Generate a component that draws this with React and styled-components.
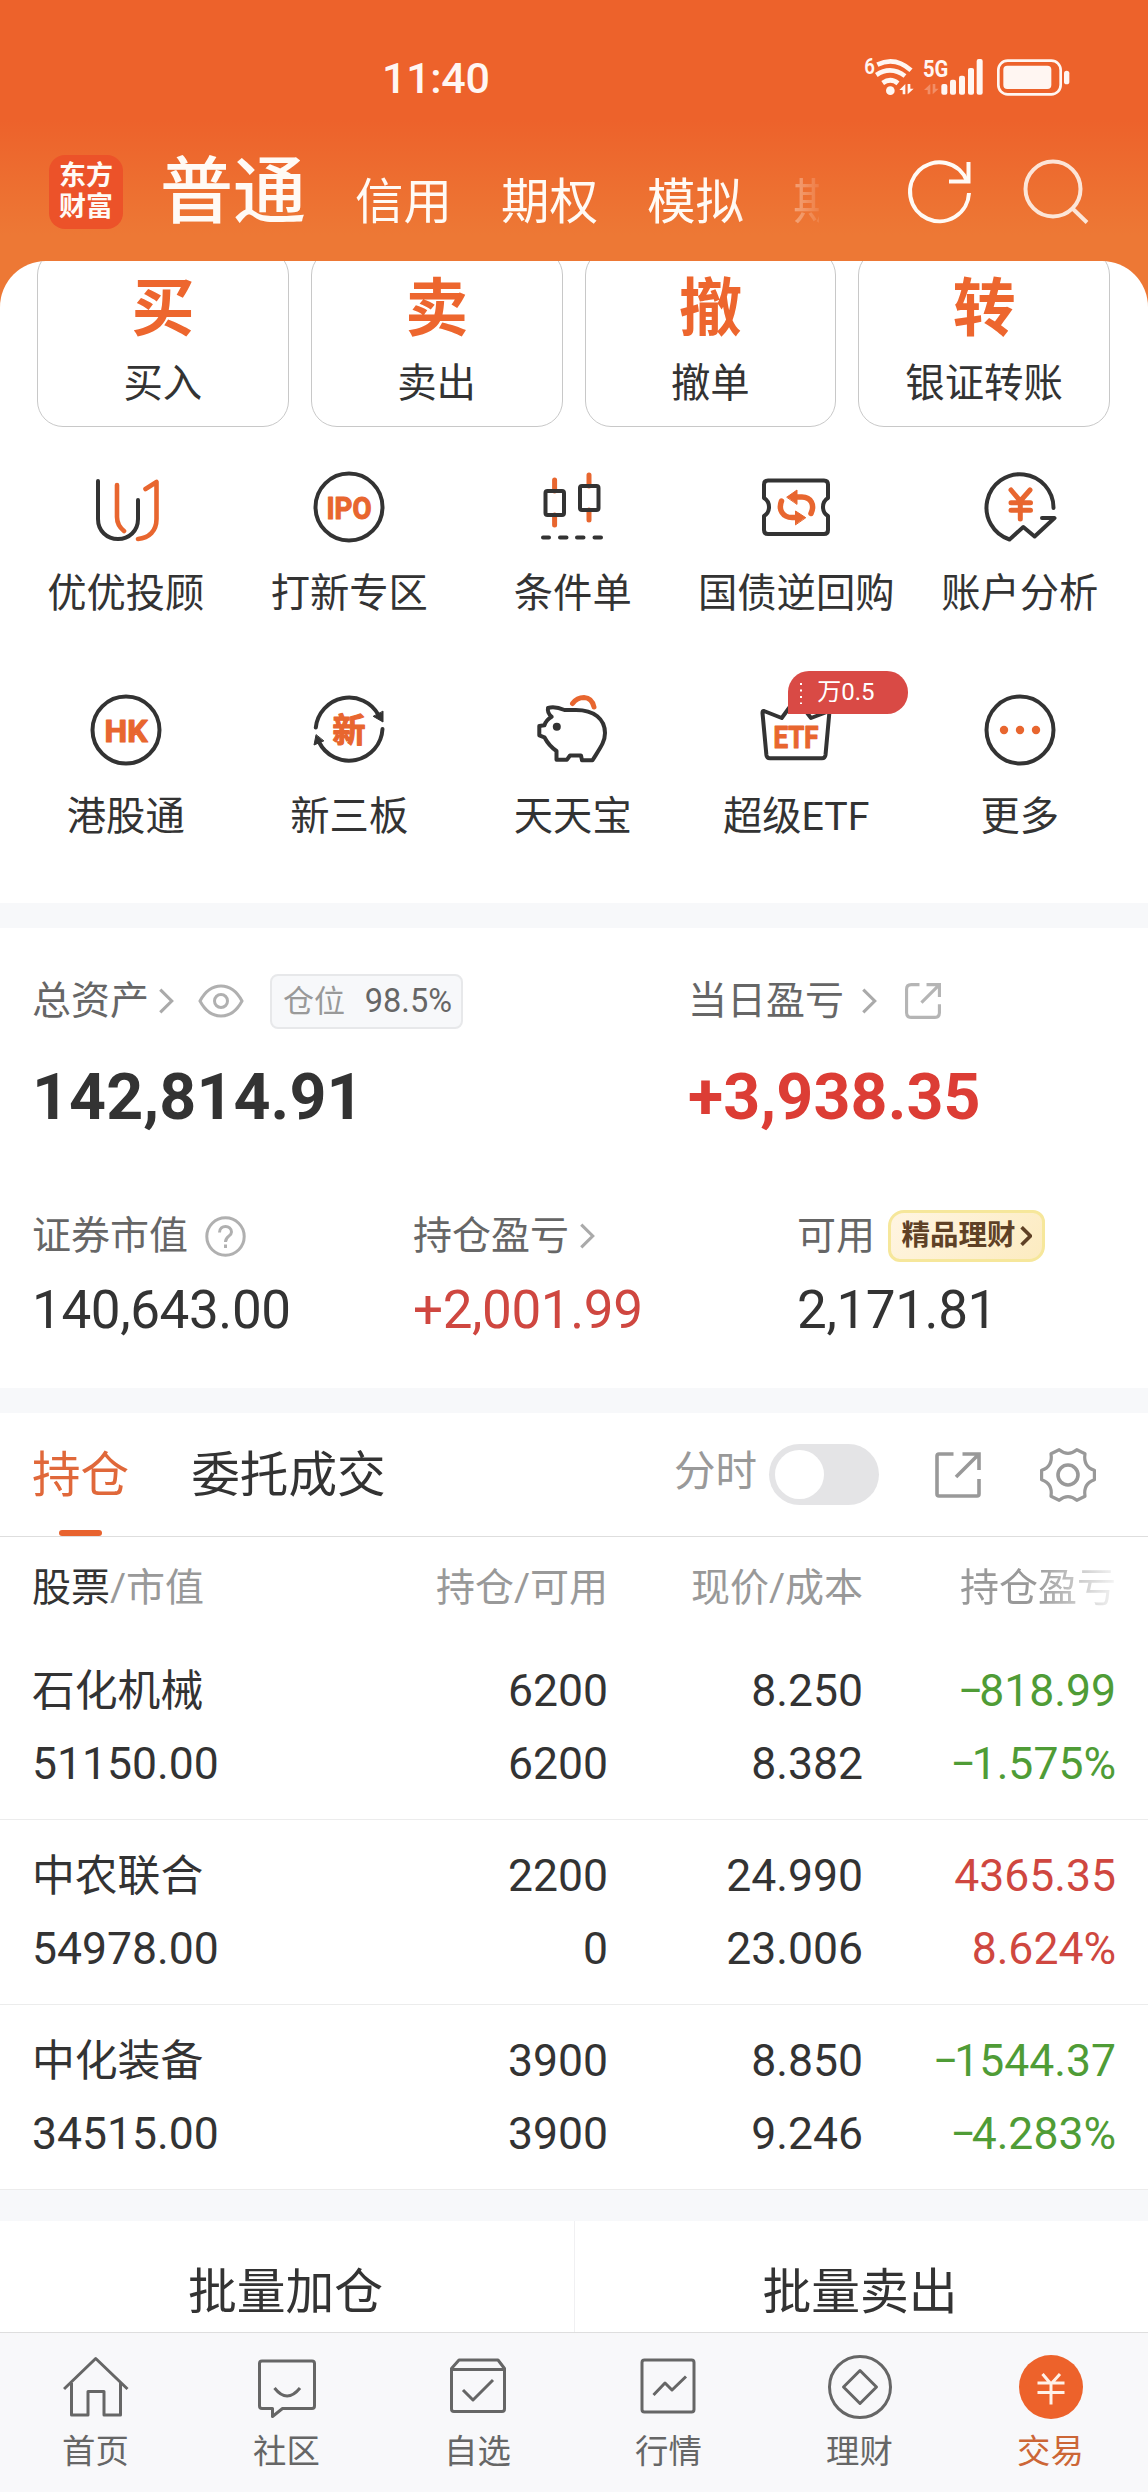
import React from 'react'
import styled, { createGlobalStyle } from 'styled-components'

const GlobalStyle = createGlobalStyle`
* {
    box-sizing: border-box;
}

body {
    margin: 0;
    background: #fff;
    font-family: Roboto, 'Noto Sans CJK SC', sans-serif;
    color: #333;
}

svg {
    display: block;
    flex-shrink: 0;
}
`

const Page = styled.div`
width: 1148px;
height: 2492px;
display: flex;
flex-direction: column;
overflow: hidden;
background: linear-gradient(#ed622b 0, #ed622b 120px, #ed7835 235px, #ed7835 320px, #fff 320px);
`

const StatusBar = styled.div`
height: 120px;
padding: 40px 28px 0 382px;
display: flex;
align-items: center;
justify-content: space-between;
color: #fff6f2;
`

const Time = styled.span`
font-size: 43px;
font-weight: 500;
line-height: 76px;
letter-spacing: -0.3px;
margin-top: -4px;
`

const NavBar = styled.div`
height: 141px;
padding: 3px 0 0 49px;
display: flex;
align-items: center;
color: #fffaf5;
`

const Logo = styled.div`
width: 74px;
height: 74px;
padding-top: 6px;
border-radius: 16px;
background: #ec5229;
font-size: 27px;
font-weight: 700;
line-height: 31px;
text-align: center;
`

const NavTabs = styled.div`
width: 659px;
height: 130px;
margin-left: 37px;
display: flex;
align-items: center;
gap: 49px;
overflow: hidden;
white-space: nowrap;
mask-image: linear-gradient(90deg, #000 87%, rgba(0,0,0,0.1) 100%);
`

const NavTab = styled.span`
flex-shrink: 0;
font-size: ${({ $active }) => ($active ? 73 : 48.5)}px;
font-weight: ${({ $active }) => ($active ? 500 : 400)};
line-height: 110px;
padding-top: ${({ $active }) => ($active ? 0 : 22)}px;
`

const NavIcons = styled.div`
margin-left: 88px;
display: flex;
gap: 50px;
`

const Sheet = styled.div`
height: 642px;
padding: 0 38px 0 37px;
border-radius: 46px 46px 0 0;
background: #fff;
overflow: hidden;
`

const Cards = styled.div`
display: grid;
grid-template-columns: repeat(4, 1fr);
gap: 22px;
margin-top: -12px;
`

const Card = styled.div`
height: 178px;
padding-top: 23px;
border: 1px solid #c8c8c8;
border-radius: 26px;
display: flex;
flex-direction: column;
align-items: center;
font-size: 39.4px;
line-height: 60px;
`

const CardGlyph = styled.div`
color: #ed662e;
font-size: 63px;
font-weight: 700;
line-height: 72px;
margin-bottom: 9px;
`

const Shortcuts = styled.div`
display: grid;
grid-template-columns: repeat(5, 223.5px);
margin: 42px -22px 0 -23px;
row-gap: 76px;
`

const Shortcut = styled.div`
display: flex;
flex-direction: column;
align-items: center;
gap: 19px;
height: 147px;
font-size: 39.3px;
line-height: 60px;
white-space: nowrap;
`

const ShortcutIcon = styled.div`
position: relative;
`

const Badge = styled.div`
position: absolute;
left: 30px;
top: -21px;
width: 120px;
height: 43px;
padding-left: 10px;
display: flex;
align-items: center;
gap: 14px;
border-radius: 21px 21px 21px 0;
background: #d94a45;
color: #fff;
font-size: 24px;
line-height: 45px;
`

const Band = styled.div`
height: ${({ $height }) => $height}px;
flex-shrink: 0;
background: #f7f8fa;
`

const Assets = styled.div`
height: 460px;
padding: 43px 32px 0;
background: #fff;
`

const Figures = styled.div`
display: grid;
grid-template-columns: ${({ $columns }) => $columns};
margin-top: ${({ $top }) => $top || 0}px;
`

const FigureLabel = styled.div`
height: 60px;
display: flex;
align-items: center;
font-size: 39px;
line-height: 62px;
color: #666;
`

const Total = styled.div`
margin-top: 31px;
font-size: 64.5px;
font-weight: 700;
line-height: 70px;
letter-spacing: 0.1px;
color: ${({ $color }) => $color || '#333'};
`

const Amount = styled.div`
margin-top: 14px;
font-size: 53px;
line-height: 60px;
letter-spacing: -0.4px;
color: ${({ $color }) => $color || '#333'};
`

const Spacer = styled.span`
width: ${({ $width }) => $width}px;
flex-shrink: 0;
`

const Position = styled.div`
width: 193px;
height: 55px;
display: flex;
align-items: center;
justify-content: space-between;
padding: 0 9px 0 11px;
border: 2px solid #e7e8ea;
border-radius: 8px;
background: #f7f8fa;
font-size: 32.5px;
line-height: 51px;
color: #666;

span {
    font-size: 31px;
    color: #999;
}
`

const Wealth = styled.div`
width: 157px;
height: 52px;
display: flex;
align-items: center;
justify-content: center;
gap: 4px;
border: 3px solid #f6e79b;
border-radius: 16px 12px 16px 12px;
background: linear-gradient(135deg, #fff5e2, #fcebc0);
font-size: 28.5px;
font-weight: 700;
line-height: 48px;
color: #5f4126;
`

const TabBar = styled.div`
height: 124px;
padding: 0 52px 0 32px;
display: flex;
align-items: center;
flex-shrink: 0;
border-bottom: 1px solid #dedede;
background: #fff;
`

const Tab = styled.div`
height: 123px;
display: flex;
flex-direction: column;
align-items: center;
margin-right: 62px;
font-size: 48.6px;
line-height: 117px;
padding-top: 4px;
color: ${({ $active }) => ($active ? '#e0683a' : '#333')};

&::after {
    content: '';
    width: 43px;
    height: 6px;
    margin-top: -4px;
    border-radius: 3px;
    background: ${({ $active }) => ($active ? '#e8632f' : 'transparent')};
}
`

const SwitchLabel = styled.span`
margin-left: auto;
margin-right: 12px;
padding-bottom: 5px;
font-size: 41.5px;
line-height: 60px;
color: #999;
`

const Switch = styled.div`
width: 110px;
height: 61px;
padding: 6px;
border-radius: 31px;
background: #e4e4e6;

&::after {
    content: '';
    display: block;
    width: 49px;
    height: 49px;
    border-radius: 50%;
    background: #fff;
}
`

const Row = styled.div`
display: grid;
grid-template-columns: 276px 300px 255px 253px;
padding: 0 32px;
text-align: right;
background: #fff;
`

const HeadRow = styled(Row)`
height: 98px;
flex-shrink: 0;
font-size: 39px;
line-height: 102px;
color: #999;

b {
    font-weight: 400;
    color: #333;
}

> :first-child {
    text-align: left;
}

> :last-child {
    mask-image: linear-gradient(90deg, #000 68%, rgba(0,0,0,0.1) 100%);
}
`

const HoldingRow = styled(Row)`
height: 185px;
padding-top: 20px;
flex-shrink: 0;
border-bottom: 1px solid #ececec;
font-size: 44.5px;
line-height: 73px;
`

const Cell = styled.div`
color: ${({ $color }) => $color || '#333'};
text-align: ${({ $left }) => ($left ? 'left' : 'right')};
`

const Name = styled.div`
font-size: 42.8px;
`

const Sign = styled.span`
margin-right: -4px;
`

const Actions = styled.div`
height: 111px;
display: grid;
grid-template-columns: 1fr 1fr;
flex-shrink: 0;
background: #fff;
`

const Action = styled.div`
padding: 16px 3px 0 0;
font-size: 48.8px;
line-height: 112px;
text-align: center;

& + & {
    border-left: 1px solid #f0f0f2;
}
`

const BottomNav = styled.div`
height: 160px;
padding: 19px 2px 0 0;
display: grid;
grid-template-columns: repeat(6, 1fr);
flex-shrink: 0;
border-top: 1px solid #dedede;
background: #f8f8fa;
`

const NavItem = styled.div`
display: flex;
flex-direction: column;
align-items: center;
gap: 10px;
font-size: 33.4px;
line-height: 40px;
color: ${({ $active }) => ($active ? '#cc6636' : '#666')};
`

const RED = '#cf4740'
const GREEN = '#4f9c36'
const ORANGE = '#e8662f'

const StatusIcons = () => (
    <svg width="280" height="80" viewBox="0 0 840 240" fill="currentColor">
        <text x="73" y="101" fontSize="66" fontWeight="600" textLength="32" lengthAdjust="spacingAndGlyphs">6</text>
        <g fill="none" stroke="currentColor" strokeWidth="14">
            <path d="M112 74Q165 48 213 91" />
            <path d="M109 105Q152 76 195 108" />
            <path d="M128 129Q152 112 174 130" />
        </g>
        <circle cx="151" cy="152" r="13" />
        <path d="M196 132V163H188V150H178ZM203 132V163L221 146H211V132Z" />
        <text x="249" y="110" fontSize="72" fontWeight="700" textLength="76" lengthAdjust="spacingAndGlyphs">5G</text>
        <path opacity="0.3" d="M271 132V163H263V150H252ZM278 132V163L296 146H286V132Z" />
        <rect x="304" y="132" width="18" height="32" rx="6" />
        <rect x="330" y="119" width="18" height="45" rx="6" />
        <rect x="357" y="107" width="18" height="57" rx="6" />
        <rect x="384" y="84" width="18" height="80" rx="6" />
        <rect x="410" y="57" width="18" height="107" rx="6" />
        <rect x="475" y="62" width="187" height="101" rx="28" fill="none" stroke="currentColor" strokeWidth="8" />
        <rect x="490" y="77" width="144" height="70" rx="12" />
        <rect x="672" y="92" width="16" height="41" rx="8" />
    </svg>
)

const Chevron = ({ width = 16, height = 26, color = '#aaa', stroke = 3 }) => (
    <svg width={width} height={height} viewBox="0 0 15 25" fill="none" stroke={color} strokeWidth={stroke}>
        <path d="M2 1.5L13 12.5L2 23.5" />
    </svg>
)

const ShareIcon = ({ size, color, radius = 2 }) => (
    <svg width={size} height={size} viewBox="0 0 46 46" fill="none" stroke={color} strokeWidth={size < 40 ? 4 : 3.6}>
        <path d={`M18.500 2H${2 + radius}Q2 2 2 ${2 + radius}V${44 - radius}Q2 44 ${2 + radius} 44H${44 - radius}Q44 44 44 ${44 - radius}V27`} />
        <path d="M27.500 2H44V18M44 2L21 25" />
    </svg>
)

const GearIcon = () => (
    <svg width="56" height="56" viewBox="-28 -28 56 56" fill="none" stroke="#999" strokeWidth="3.2" strokeLinejoin="round">
        <path d="M-8.800 -25.300Q0 -18 8.800 -25.300L17 -21.300Q15 -8.500 26.400 -4.700V4.700Q15 8.500 17 21.300L8.800 25.300Q0 18 -8.800 25.300L-17 21.300Q-15 8.500 -26.400 4.700V-4.700Q-15 -8.500 -17 -21.300Z" />
        <circle r="10" strokeWidth="3.6" />
    </svg>
)

const IconText = ({ children, width, y = 49.5, size = 32 }) => (
    <text
        x={38 - width / 2}
        y={y}
        fontSize={size}
        fontWeight="700"
        textLength={width}
        lengthAdjust="spacingAndGlyphs"
        fill={ORANGE}
        stroke={ORANGE}
        strokeWidth="1.2"
        strokeLinejoin="round"
    >
        {children}
    </text>
)

const shortcutDrawings = {
    uu: (
        <>
            <path d="M10 12V50C10 62 19 70 30 70S50 62 50 50V31" />
            <path stroke={ORANGE} strokeWidth="4.600" d="M29 16V48C29 54 31 58 36 62M57.500 20L68.500 13V50C68.500 62 61 69 50 70" />
        </>
    ),
    ipo: (
        <>
            <circle cx="38" cy="38" r="33.500" />
            <IconText width={45}>IPO</IconText>
        </>
    ),
    candle: (
        <>
            <path stroke={ORANGE} strokeWidth="5" d="M19.600 11V22M19.600 46V56M54 6V17M54 41V51" />
            <rect x="10.500" y="22" width="18.500" height="24" rx="2" />
            <rect x="45" y="17" width="18.500" height="24" rx="2" />
            <path d="M8 68.500H14M25 68.500H31.500M42 68.500H48.500M59.500 68.500H66" />
        </>
    ),
    repo: (
        <>
            <path d="M10 11.500H66Q70 11.500 70 15.500V29Q65 32 65 38T70 47V61Q70 65 66 65H10Q6 65 6 61V47Q11 44 11 38T6 29V15.500Q6 11.500 10 11.500Z" />
            <path stroke={ORANGE} strokeWidth="5.500" d="M53 44.500C57 36 53 28 44 28H38M23.500 32C20 41 25 48.500 34 48.500H38" />
            <path stroke={ORANGE} strokeWidth="1" fill={ORANGE} d="M29 28L39 21V35ZM47.500 48.500L37.500 42V55.500Z" />
        </>
    ),
    analysis: (
        <>
            <path d="M71.500 39A33.500 33.500 0 1 0 27.500 70.500L41.300 58L52.600 67.500L72.500 49H60" />
            <path stroke={ORANGE} strokeWidth="5" d="M29 21L38.300 32L48 21M38.300 32V50M29 33.700H48.500M29 41.300H48.500" />
        </>
    ),
    hk: (
        <>
            <circle cx="38" cy="38" r="33.500" />
            <IconText width={43}>HK</IconText>
        </>
    ),
    neeq: (
        <>
            <path d="M4.800 35.500A33.500 33.500 0 0 1 67.500 23M71.500 37A33.500 33.500 0 0 1 8 50" />
            <path strokeWidth="1" fill="#333" d="M72 19.500V30L62.500 24.500ZM5 43L3 53L12.500 49Z" />
            <IconText width={33} size={33}>新</IconText>
        </>
    ),
    piggy: (
        <>
            <path d="M13 16Q20 14 29.500 18H38C60 17 70 28 70 41C70 50 65 56 57.500 68.300H47L46 63.500H35L32 67.700H21.500V59Q14 54 9.400 45.300L4.300 43.300V34L9.400 33.300Q11 28 16.700 24.700Q12 21 13 16Z" />
            <circle cx="21.800" cy="34.700" r="4" fill="#333" stroke="none" />
            <path stroke={ORANGE} strokeWidth="5" d="M37.500 11.500Q42 5.500 49 5.500Q57 6 59 15" />
        </>
    ),
    etf: (
        <>
            <path d="M6 19L23.700 26L38 6.500L53 26L71.500 19L67.500 63Q67 66.300 64 66.300H12Q8.800 66.300 8.400 63L4.500 21Q4.500 18.500 6 19Z" />
            <IconText width={45} y={55.5}>ETF</IconText>
        </>
    ),
    more: (
        <>
            <circle cx="38" cy="38" r="33.500" />
            <g fill={ORANGE} stroke="none">
                <circle cx="22" cy="38" r="4.200" />
                <circle cx="38" cy="38" r="4.200" />
                <circle cx="54" cy="38" r="4.200" />
            </g>
        </>
    ),
}

const bottomDrawings = {
    home: <path d="M1 37L32.700 6.500L64.500 37M8.500 31V63H25V39.500H41V63H57.500V31" />,
    social: (
        <>
            <path d="M8 9H58Q60.500 9 60.500 11.500V54Q60.500 56.500 58 56.500H28.500L18.500 64.500V56.500H8Q5.500 56.500 5.500 54V11.500Q5.500 9 8 9Z" />
            <path d="M20.500 36Q33 52 46 36" />
        </>
    ),
    watch: (
        <>
            <path d="M14 8H53L59.500 16.500V57Q59.500 59.500 57 59.500H9Q6.500 59.500 6.500 57V16.500ZM6.500 17.500H59.500" />
            <path d="M18 38L28 48L48 28" />
        </>
    ),
    quote: (
        <>
            <rect x="6" y="8" width="52" height="52" rx="2.500" />
            <path d="M17.500 43L29 31L36 38L50 24.500" />
        </>
    ),
    wealth: (
        <>
            <circle cx="33" cy="35" r="30.500" />
            <path d="M33 18.500L49.500 35L33 51.500L16.500 35Z" />
        </>
    ),
    trade: (
        <>
            <circle cx="33" cy="35" r="32" fill="#ed622b" stroke="none" />
            <path stroke="#fff1e8" d="M24.500 22L33 32L42 22M33 32V52.500M19.500 31H46.500M19.500 40.500H46.500" />
        </>
    ),
}

const navTabs = ['信用', '期权', '模拟', '期']

const cards = [
    { glyph: '买', label: '买入' },
    { glyph: '卖', label: '卖出' },
    { glyph: '撤', label: '撤单' },
    { glyph: '转', label: '银证转账' },
]

const shortcuts = [
    { icon: 'uu', label: '优优投顾' },
    { icon: 'ipo', label: '打新专区' },
    { icon: 'candle', label: '条件单' },
    { icon: 'repo', label: '国债逆回购' },
    { icon: 'analysis', label: '账户分析' },
    { icon: 'hk', label: '港股通' },
    { icon: 'neeq', label: '新三板' },
    { icon: 'piggy', label: '天天宝' },
    { icon: 'etf', label: '超级ETF', badge: '万0.5' },
    { icon: 'more', label: '更多' },
]

const holdings = [
    { name: '石化机械', value: '51150.00', count: '6200', free: '6200', price: '8.250', cost: '8.382', loss: true, profit: '818.99', rate: '1.575%' },
    { name: '中农联合', value: '54978.00', count: '2200', free: '0', price: '24.990', cost: '23.006', profit: '4365.35', rate: '8.624%' },
    { name: '中化装备', value: '34515.00', count: '3900', free: '3900', price: '8.850', cost: '9.246', loss: true, profit: '1544.37', rate: '4.283%' },
]

const bottomItems = [
    { icon: 'home', label: '首页' },
    { icon: 'social', label: '社区' },
    { icon: 'watch', label: '自选' },
    { icon: 'quote', label: '行情' },
    { icon: 'wealth', label: '理财' },
    { icon: 'trade', label: '交易', active: true },
]

const Header = () => (
    <>
        <StatusBar>
            <Time>11:40</Time>
            <StatusIcons />
        </StatusBar>
        <NavBar>
            <Logo>东方<br />财富</Logo>
            <NavTabs>
                <NavTab $active>普通</NavTab>
                {navTabs.map(tab => <NavTab key={tab}>{tab}</NavTab>)}
            </NavTabs>
            <NavIcons>
                <svg width="66" height="66" viewBox="0 0 66 66" fill="none" stroke="currentColor" strokeWidth="4">
                    <path d="M62 34A29.500 29.500 0 1 1 60 22" />
                    <path d="M61.500 3V22.500H42" />
                </svg>
                <svg width="66" height="66" viewBox="0 0 66 66" fill="none" stroke="currentColor" strokeWidth="4" opacity="0.850">
                    <circle cx="30" cy="30" r="27.500" />
                    <path d="M50 50L64 63.500" />
                </svg>
            </NavIcons>
        </NavBar>
    </>
)

const AssetSummary = () => (
    <Assets>
        <Figures $columns="656px 1fr">
            <div>
                <FigureLabel>
                    总资产<Spacer $width={9} /><Chevron /><Spacer $width={24} />
                    <svg width="46" height="34" viewBox="0 0 46 34" fill="none" stroke="#b0b0b0" strokeWidth="3">
                        <path d="M2 17Q10 2 23 2T44 17Q36 32 23 32T2 17Z" />
                        <circle cx="23" cy="17" r="6.500" />
                    </svg>
                    <Spacer $width={26} />
                    <Position><span>仓位</span>98.5%</Position>
                </FigureLabel>
                <Total>142,814.91</Total>
            </div>
            <div>
                <FigureLabel>
                    当日盈亏<Spacer $width={17} /><Chevron /><Spacer $width={28} />
                    <ShareIcon size={36} color="#b5b5b5" radius={6} />
                </FigureLabel>
                <Total $color="#dc3d35">+3,938.35</Total>
            </div>
        </Figures>
        <Figures $columns="381px 384px 1fr" $top={74}>
            <div>
                <FigureLabel>
                    证券市值<Spacer $width={17} />
                    <svg width="41" height="41" viewBox="0 0 41 41" fill="none" stroke="#b0b0b0" strokeWidth="3">
                        <circle cx="20.500" cy="20.500" r="18.700" />
                        <path d="M14.500 16.500C14.500 8.500 26.500 8.500 26.500 16C26.500 20.500 20.500 20 20.500 26M20.500 28.500V32" />
                    </svg>
                </FigureLabel>
                <Amount>140,643.00</Amount>
            </div>
            <div>
                <FigureLabel>持仓盈亏<Spacer $width={10} /><Chevron /></FigureLabel>
                <Amount $color={RED}>+2,001.99</Amount>
            </div>
            <div>
                <FigureLabel>
                    可用<Spacer $width={13} />
                    <Wealth>精品理财<Chevron width={12} height={20} color="#5f4126" stroke={4.5} /></Wealth>
                </FigureLabel>
                <Amount>2,171.81</Amount>
            </div>
        </Figures>
    </Assets>
)

const Holdings = () => (
    <>
        <TabBar>
            <Tab $active>持仓</Tab>
            <Tab>委托成交</Tab>
            <SwitchLabel>分时</SwitchLabel>
            <Switch />
            <Spacer $width={56} />
            <ShareIcon size={46} color="#999" />
            <Spacer $width={59} />
            <GearIcon />
        </TabBar>
        <HeadRow>
            <div><b>股票</b>/市值</div>
            <div>持仓/可用</div>
            <div>现价/成本</div>
            <div>持仓盈亏</div>
        </HeadRow>
        {holdings.map(item => (
            <HoldingRow key={item.name}>
                <Cell $left><Name>{item.name}</Name>{item.value}</Cell>
                <Cell>{item.count}<br />{item.free}</Cell>
                <Cell>{item.price}<br />{item.cost}</Cell>
                <Cell $color={item.loss ? GREEN : RED}>
                    {item.loss && <Sign>−</Sign>}{item.profit}
                    <br />
                    {item.loss && <Sign>−</Sign>}{item.rate}
                </Cell>
            </HoldingRow>
        ))}
    </>
)

const App = () => {
    return (
        <Page>
            <GlobalStyle />
            <Header />
            <Sheet>
                <Cards>
                    {cards.map(card => (
                        <Card key={card.label}>
                            <CardGlyph>{card.glyph}</CardGlyph>
                            {card.label}
                        </Card>
                    ))}
                </Cards>
                <Shortcuts>
                    {shortcuts.map(item => (
                        <Shortcut key={item.label}>
                            <ShortcutIcon>
                                <svg width="76" height="76" viewBox="0 0 76 76" fill="none" stroke="#333" strokeWidth="4" strokeLinecap="round" strokeLinejoin="round">
                                    {shortcutDrawings[item.icon]}
                                </svg>
                                {item.badge && (
                                    <Badge>
                                        <svg width="5" height="22" viewBox="0 0 5 22" stroke="#fff" strokeWidth="2" strokeDasharray="2 4.500">
                                            <path d="M3 1V22" />
                                        </svg>
                                        {item.badge}
                                    </Badge>
                                )}
                            </ShortcutIcon>
                            {item.label}
                        </Shortcut>
                    ))}
                </Shortcuts>
            </Sheet>
            <Band $height={25} />
            <AssetSummary />
            <Band $height={25} />
            <Holdings />
            <Band $height={31} />
            <Actions>
                <Action>批量加仓</Action>
                <Action>批量卖出</Action>
            </Actions>
            <BottomNav>
                {bottomItems.map(item => (
                    <NavItem key={item.label} $active={item.active}>
                        <svg width="66" height="70" viewBox="0 0 66 70" fill="none" stroke="#666" strokeWidth="3" strokeLinejoin="round">
                            {bottomDrawings[item.icon]}
                        </svg>
                        {item.label}
                    </NavItem>
                ))}
            </BottomNav>
        </Page>
    )
}

export default App
